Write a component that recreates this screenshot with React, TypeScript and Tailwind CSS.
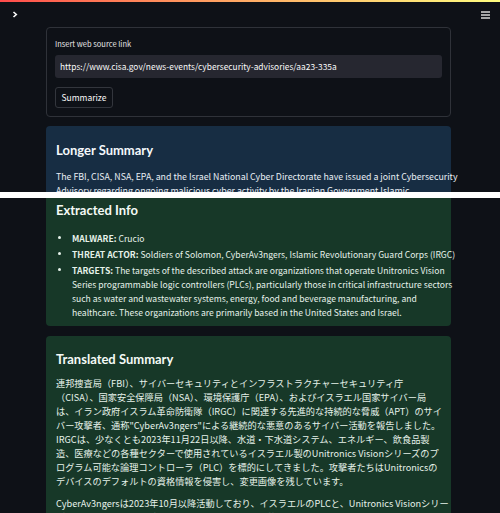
import React from 'react';

const FONT = '"Noto Sans CJK JP", "Liberation Sans", sans-serif';
const HEAD = 'Lato, "Noto Sans CJK JP", sans-serif';

const jp1 = [
  '連邦捜査局（FBI）、サイバーセキュリティとインフラストラクチャーセキュリティ庁',
  '（CISA）、国家安全保障局（NSA）、環境保護庁（EPA）、およびイスラエル国家サイバー局',
  'は、イラン政府イスラム革命防衛隊（IRGC）に関連する先進的な持続的な脅威（APT）のサイ',
  'バー攻撃者、通称"CyberAv3ngers"による継続的な悪意のあるサイバー活動を報告しました。',
  'IRGCは、少なくとも2023年11月22日以降、水道・下水道システム、エネルギー、飲食品製',
  '造、医療などの各種セクターで使用されているイスラエル製のUnitronics Visionシリーズのプ',
  'ログラム可能な論理コントローラ（PLC）を標的にしてきました。攻撃者たちはUnitronicsの',
  'デバイスのデフォルトの資格情報を侵害し、変更画像を残しています。',
];

const jp2 = [
  'CyberAv3ngersは2023年10月以降活動しており、イスラエルのPLCと、Unitronics Visionシリー',
  'ズを使用する米国の水道施設を含む複数の組織を標的にしていると主張しています。',
];

const targets = [
  'The targets of the described attack are organizations that operate Unitronics Vision',
  'Series programmable logic controllers (PLCs), particularly those in critical infrastructure sectors',
  'such as water and wastewater systems, energy, food and beverage manufacturing, and',
  'healthcare. These organizations are primarily based in the United States and Israel.',
];

const Lines = ({ lines }: { lines: string[] }) => (
  <>
    {lines.map((l, i) => (
      <span key={i} className="block whitespace-nowrap">
        {l}
      </span>
    ))}
  </>
);

const Bullet = ({ label, lines }: { label: string; lines: string[] }) => (
  <li className="relative pl-[16px]">
    <span className="absolute left-[2px] top-[5px] w-[3px] h-[3px] rounded-full bg-[#e6f2ea]" />
    <span className="block whitespace-nowrap">
      <b className="font-bold">{label}:</b> {lines[0]}
    </span>
    {lines.slice(1).map((l, i) => (
      <span key={i} className="block whitespace-nowrap">
        {l}
      </span>
    ))}
  </li>
);

const Heading = ({ children, className }: { children: React.ReactNode; className: string }) => (
  <h3 className={`text-[13px] leading-[20px] font-bold ${className}`} style={{ fontFamily: HEAD }}>
    {children}
  </h3>
);

export default function App() {
  return (
    <div
      className="w-[500px] h-[513px] overflow-hidden bg-[#0e1117] text-[#fafafa]"
      style={{ fontFamily: FONT }}
    >
      <div className="h-[2px] bg-gradient-to-r from-[#ff4b4b] to-[#fffd80]" />
      <div className="h-[25px] flex items-center justify-between pl-[12px] pr-[10px]">
        <svg width="6" height="7" viewBox="0 0 6 7" fill="none">
          <path d="M1.5 1 L4.3 3.5 L1.5 6" stroke="#fafafa" strokeWidth="1.6" />
        </svg>
        <svg width="9" height="8" viewBox="0 0 9 8" fill="none">
          <path d="M0 1 H9 M0 4 H9 M0 7 H9" stroke="#d8d8d8" strokeWidth="1.4" />
        </svg>
      </div>

      <div className="h-[165px] overflow-hidden">
        <div className="ml-[46px] w-[405px] border border-[#2f3239] rounded-[4px] pt-[10px] pb-[8px] px-[8px]">
          <div className="text-[7.5px] leading-[12px] text-[#e8e8e8] mb-[5px]">Insert web source link</div>
          <div className="h-[23px] bg-[#262730] rounded-[3px] flex items-center px-[5px] text-[8.4px]">
            https://www.cisa.gov/news-events/cybersecurity-advisories/aa23-335a
          </div>
          <button
            type="button"
            className="mt-[9px] h-[21px] w-[58px] border border-[#33363d] rounded-[3px] text-[8.5px] text-[#fafafa] flex items-center justify-center"
          >
            Summarize
          </button>
        </div>

        <div className="ml-[46px] w-[405px] mt-[9px] bg-[#172d43] rounded-[4px] pt-[14px] px-[10px] text-[#e8eef4]">
          <Heading className="text-[#f4f8fb] mb-[10px]">Longer Summary</Heading>
          <p className="text-[8.8px] leading-[14.3px]">
            <Lines
              lines={[
                'The FBI, CISA, NSA, EPA, and the Israel National Cyber Directorate have issued a joint Cybersecurity',
                'Advisory regarding ongoing malicious cyber activity by the Iranian Government Islamic',
                'Revolutionary Guard Corps (IRGC) affiliated advanced persistent threat actors.',
              ]}
            />
          </p>
        </div>
      </div>

      <div className="h-[6px] bg-white" />

      <div className="ml-[46px] w-[405px] bg-[#173828] rounded-b-[4px] pt-[2px] pb-[7px] px-[10px] text-[#e6f2ea]">
        <Heading className="text-[#f4faf6] mb-[11px]">Extracted Info</Heading>
        <ul className="text-[8.6px] leading-[14px] flex flex-col gap-[2px]">
          <Bullet label="MALWARE" lines={['Crucio']} />
          <Bullet
            label="THREAT ACTOR"
            lines={['Soldiers of Solomon, CyberAv3ngers, Islamic Revolutionary Guard Corps (IRGC)']}
          />
          <Bullet label="TARGETS" lines={targets} />
        </ul>
      </div>

      <div className="ml-[46px] w-[405px] mt-[10px] bg-[#173828] rounded-[4px] pt-[13px] pb-[14px] px-[10px] text-[#e6f2ea]">
        <Heading className="text-[#f4faf6] mb-[7px]">Translated Summary</Heading>
        <p className="text-[9.2px] leading-[14px] mb-[8px]">
          <Lines lines={jp1} />
        </p>
        <p className="text-[9.2px] leading-[14px]">
          <Lines lines={jp2} />
        </p>
      </div>
    </div>
  );
}
